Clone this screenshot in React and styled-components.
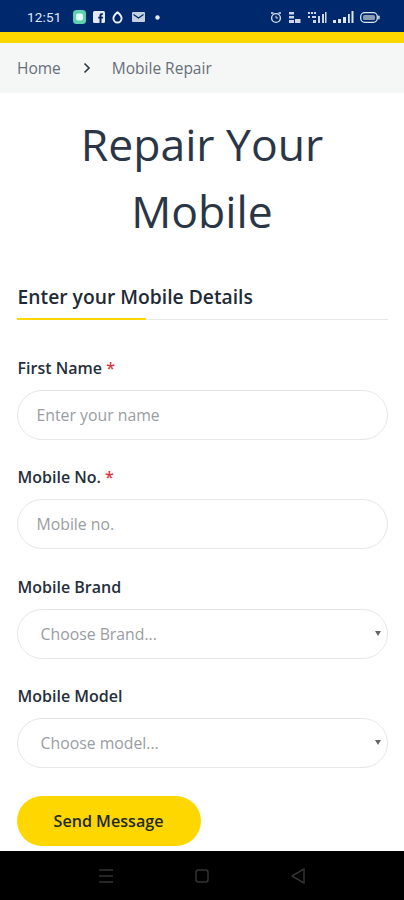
import React from "react";
import styled, { createGlobalStyle } from "styled-components";

const Global = createGlobalStyle`
  html, body { margin: 0; padding: 0; background: #fff; }
  * { box-sizing: border-box; }
  body { font-family: "Open Sans", "Liberation Sans", sans-serif; overflow: hidden; }
`;

const Screen = styled.div`
  width: 404px; height: 900px; display: flex; flex-direction: column; overflow: hidden; background: #fff;
`;
const StatusBar = styled.div`
  height: 32px; background: #00286d; display: flex; align-items: center; justify-content: space-between;
  padding: 2px 24px 0 27px; color: #dfe7f2; flex: none;
`;
const StatusGroup = styled.div`
  display: flex; align-items: center; gap: ${p => p.$gap || 7}px;
`;
const Clock = styled.span`
  font-size: 13.5px; line-height: 16px; font-family: "Roboto", sans-serif; margin-right: 4px; letter-spacing: 0.2px;
`;
const Stripe = styled.div`
  height: 11px; background: #fed700; flex: none;
`;
const Crumbs = styled.nav`
  height: 50px; background: #f5f7f7; display: flex; align-items: center; padding: 0 0 1px 17px;
  font-size: 15.5px; color: #666f78; flex: none;
`;
const Crumb = styled.span`
  line-height: 20px;
`;
const Chevron = styled.svg`
  width: 10px; height: 12px; margin: 0 20px 0 21px; color: #333c45;
`;
const Main = styled.main`
  flex: 1; padding: 0 16.5px; min-height: 0; display: flex; flex-direction: column;
`;
const Title = styled.h1`
  margin: 17px 0 0; font-size: 44.5px; line-height: 67px; font-weight: 400; color: #2a3645; text-align: center;
`;
const SectionTitle = styled.h2`
  margin: 40px 0 0; padding: 0 0 9px 1px; font-size: 19.3px; line-height: 26px; font-weight: 600; color: #1f2a37;
  border-bottom: 1px solid #e6e8ea; position: relative;
  &::after {
    content: ""; position: absolute; left: 0; bottom: -1px; width: 129px; height: 2px; background: #fed700;
  }
`;
const Form = styled.form`
  display: flex; flex-direction: column; margin-top: 37.5px;
`;
const Field = styled.div`
  display: flex; flex-direction: column; margin-bottom: 27.5px;
`;
const Label = styled.label`
  font-size: 16px; line-height: 20px; font-weight: 600; color: #252f3b; padding-left: 1px; margin-bottom: 12px;
`;
const Req = styled.span`
  color: #d9363e;
`;
const Input = styled.input`
  width: 100%; height: 50px; border: 1px solid #e6e7e9; border-radius: 25px; background: #fff; outline: none;
  padding: 0 19px; font: 400 15.8px "Open Sans", sans-serif; color: #8a9097;
  &::placeholder { color: #999da2; opacity: 1; }
`;
const SelectWrap = styled.div`
  position: relative;
  &::after {
    content: ""; position: absolute; right: 7px; top: 22px;
    border-left: 3.5px solid transparent; border-right: 3.5px solid transparent; border-top: 5px solid #666;
  }
`;
const Select = styled.select`
  width: 100%; height: 50px; border: 1px solid #e6e7e9; border-radius: 25px; background: #fff; outline: none;
  appearance: none; padding: 0 23px; font: 400 15.8px "Open Sans", sans-serif; color: #999da2;
`;
const SendButton = styled.button`
  width: 184px; height: 50px; border: none; border-radius: 25px; background: #fed700; color: #1f2a20;
  font: 600 16.1px "Open Sans", sans-serif; align-self: flex-start; padding: 0;
`;
const NavBar = styled.div`
  height: 49px; background: #000; flex: none; display: flex; align-items: center; padding-left: 97px; color: #333;
`;
const NavIcon = styled.svg`
  width: 18px; height: 18px; margin-right: ${p => p.$mr || 0}px;
`;

const Icon = styled.svg`
  display: block; flex: none;
`;

const Wechat = () => (
  <Icon width="13" height="14" viewBox="0 0 13 14">
    <rect width="13" height="14" rx="3.5" fill="#5fd0b0" />
    <rect x="3" y="3.5" width="7" height="7" rx="2" fill="#e6fff6" />
  </Icon>
);
const Fb = () => (
  <Icon width="12" height="12" viewBox="0 0 12 12">
    <rect width="12" height="12" rx="1.5" fill="#e4e9f2" />
    <path d="M8.5 12V7.5H10V5.7H8.5V4.6c0-.6.3-.9.9-.9H10V2.2H8.7C7.2 2.2 6.5 3 6.5 4.4v1.3H5.2v1.8h1.3V12z" fill="#00286d" />
  </Icon>
);
const Drop = () => (
  <Icon width="11" height="13" viewBox="0 0 11 13">
    <path d="M5.5 1.2C7.6 3 9.6 4.7 9.6 7.2a4.1 4.3 0 0 1-8.2 0C1.4 4.7 3.4 3 5.5 1.2Z" fill="none" stroke="#eef2f8" strokeWidth="1.9" strokeLinejoin="round" />
  </Icon>
);
const Mail = () => (
  <Icon width="13" height="10" viewBox="0 0 13 10" style={{ marginLeft: 2 }}>
    <rect width="13" height="10" rx="1" fill="#c6cfdf" />
    <path d="M1.5 2.5 6.5 6l5-3.5" fill="none" stroke="#00286d" strokeWidth="1.2" />
  </Icon>
);
const Dot = () => (
  <Icon width="5" height="5" viewBox="0 0 5 5" style={{ marginLeft: 3 }}>
    <circle cx="2.5" cy="2.5" r="2.2" fill="#e6ebf4" />
  </Icon>
);
const Alarm = () => (
  <Icon width="12" height="13" viewBox="0 0 12 13">
    <circle cx="6" cy="7" r="4.4" fill="none" stroke="#d8dfeb" strokeWidth="1.4" />
    <path d="M6 4.8V7h2" fill="none" stroke="#d8dfeb" strokeWidth="1" />
    <path d="M1 2h2.5M8.5 2H11" stroke="#d8dfeb" strokeWidth="1.4" />
  </Icon>
);
const Speed = () => (
  <Icon width="13" height="13" viewBox="0 0 13 13">
    <path d="M1 1h5v2.5H1zM1 5h5v2.5H1zM1 9h5v3H1zM7 8h5.5v4H7z" fill="#cfd7e5" />
  </Icon>
);
const Hd = () => (
  <Icon width="20" height="13" viewBox="0 0 20 13">
    <path d="M1 1h2v2H1zM4 1h2v2H4zM7 1h2v2H7zM1 5h2v2H1zM5 5h4v2H5zM6 9h3v3H6zM11 5h2v7h-2zM15 3h2v9h-2zM18 1h1.5v11H18z" fill="#cfd7e5" />
  </Icon>
);
const Signal = () => (
  <Icon width="21" height="12" viewBox="0 0 21 12">
    <path d="M0 9h3v3H0zM5 8h3v4H5zM10 6h3v6h-3zM15 3h1.8v9H15zM18.5 0h2v12h-2z" fill="#dfe5ef" />
  </Icon>
);
const Battery = () => (
  <Icon width="20" height="11" viewBox="0 0 20 11">
    <rect x=".7" y=".7" width="16.6" height="9.6" rx="4" fill="none" stroke="#dfe5ef" strokeWidth="1.3" />
    <rect x="3" y="3" width="12" height="5" rx="1.5" fill="#8d9ab3" />
    <rect x="18.2" y="3.5" width="1.4" height="4" rx=".7" fill="#dfe5ef" />
  </Icon>
);

export default function App() {
  return (
    <Screen>
      <Global />
      <StatusBar>
        <StatusGroup>
          <Clock>12:51</Clock>
          <Wechat />
          <Fb />
          <Drop />
          <Mail />
          <Dot />
        </StatusGroup>
        <StatusGroup $gap={6}>
          <Alarm />
          <Speed />
          <Hd />
          <Signal />
          <Battery />
        </StatusGroup>
      </StatusBar>
      <Stripe />
      <Crumbs>
        <Crumb>Home</Crumb>
        <Chevron viewBox="0 0 10 12">
          <path d="M2.5 1.5 7 6l-4.5 4.5" fill="none" stroke="currentColor" strokeWidth="1.7" />
        </Chevron>
        <Crumb>Mobile Repair</Crumb>
      </Crumbs>
      <Main>
        <Title>Repair Your<br />Mobile</Title>
        <SectionTitle>Enter your Mobile Details</SectionTitle>
        <Form>
          <Field>
            <Label>First Name <Req>*</Req></Label>
            <Input placeholder="Enter your name" />
          </Field>
          <Field>
            <Label>Mobile No. <Req>*</Req></Label>
            <Input placeholder="Mobile no." />
          </Field>
          <Field>
            <Label>Mobile Brand</Label>
            <SelectWrap>
              <Select defaultValue="b"><option value="b">Choose Brand...</option></Select>
            </SelectWrap>
          </Field>
          <Field>
            <Label>Mobile Model</Label>
            <SelectWrap>
              <Select defaultValue="m"><option value="m">Choose model...</option></Select>
            </SelectWrap>
          </Field>
          <SendButton type="button">Send Message</SendButton>
        </Form>
      </Main>
      <NavBar>
        <NavIcon $mr={78} viewBox="0 0 18 18">
          <path d="M2 3h14M2 9h14M2 15h14" stroke="currentColor" strokeWidth="1.6" fill="none" />
        </NavIcon>
        <NavIcon $mr={78} viewBox="0 0 18 18">
          <rect x="3" y="3" width="12" height="12" rx="2.5" fill="none" stroke="currentColor" strokeWidth="1.5" />
        </NavIcon>
        <NavIcon viewBox="0 0 18 18">
          <path d="M15 2 3 9l12 7z" fill="none" stroke="currentColor" strokeWidth="1.5" strokeLinejoin="round" />
        </NavIcon>
      </NavBar>
    </Screen>
  );
}
